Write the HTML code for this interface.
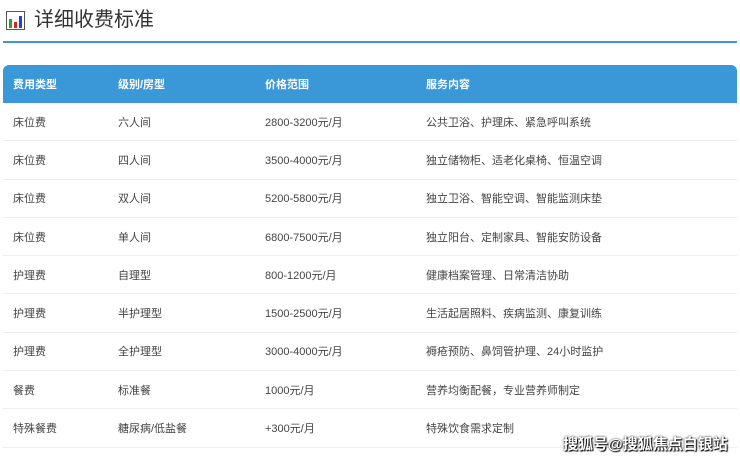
<!DOCTYPE html>
<html><head><meta charset="utf-8"><style>
body{margin:0;width:740px;height:459px;background:#fff;font-family:"Liberation Sans","Noto Sans CJK SC",sans-serif;position:relative;overflow:hidden}
.t{position:absolute;left:34px;top:6px;font-size:20px;color:#333;line-height:28px}
.ic{position:absolute;left:6px;top:11px;width:17px;height:17px;border:1px solid #555;background:#fff}
.ic i{position:absolute;bottom:1px;width:3px}
.ln{position:absolute;left:3px;top:41px;width:734px;height:2px;background:#3a97d8}
table{position:absolute;left:3px;top:65px;width:734px;border-collapse:collapse;font-size:11px;color:#444}
th{background:#3a97d8;color:#fff;text-align:left;height:38px;font-weight:bold;padding:0 0 0 10px}
th:first-child{border-top-left-radius:6px}th:last-child{border-top-right-radius:6px}
td{height:37.3px;padding:0 0 0 10px;border-bottom:1px solid #eee}
.w{position:absolute;left:563px;top:433px;font-size:15px;color:#fff;font-weight:bold;text-shadow:0 0 2px #000,1px 1px 1px #000}
</style></head><body>
<div class="ic"><i style="left:2px;height:9px;background:#2a2"></i><i style="left:7px;height:6px;background:#d22"></i><i style="left:12px;height:12px;background:#24c"></i></div>
<div class="t">详细收费标准</div>
<div class="ln"></div>
<table>
<colgroup><col style="width:105px"><col style="width:147px"><col style="width:161px"><col></colgroup>
<tr><th>费用类型</th><th>级别/房型</th><th>价格范围</th><th>服务内容</th></tr>
<tr><td>床位费</td><td>六人间</td><td>2800-3200元/月</td><td>公共卫浴、护理床、紧急呼叫系统</td></tr>
<tr><td>床位费</td><td>四人间</td><td>3500-4000元/月</td><td>独立储物柜、适老化桌椅、恒温空调</td></tr>
<tr><td>床位费</td><td>双人间</td><td>5200-5800元/月</td><td>独立卫浴、智能空调、智能监测床垫</td></tr>
<tr><td>床位费</td><td>单人间</td><td>6800-7500元/月</td><td>独立阳台、定制家具、智能安防设备</td></tr>
<tr><td>护理费</td><td>自理型</td><td>800-1200元/月</td><td>健康档案管理、日常清洁协助</td></tr>
<tr><td>护理费</td><td>半护理型</td><td>1500-2500元/月</td><td>生活起居照料、疾病监测、康复训练</td></tr>
<tr><td>护理费</td><td>全护理型</td><td>3000-4000元/月</td><td>褥疮预防、鼻饲管护理、24小时监护</td></tr>
<tr><td>餐费</td><td>标准餐</td><td>1000元/月</td><td>营养均衡配餐，专业营养师制定</td></tr>
<tr><td>特殊餐费</td><td>糖尿病/低盐餐</td><td>+300元/月</td><td>特殊饮食需求定制</td></tr>
</table>
<div class="w">搜狐号@搜狐焦点白银站</div>
</body></html>
